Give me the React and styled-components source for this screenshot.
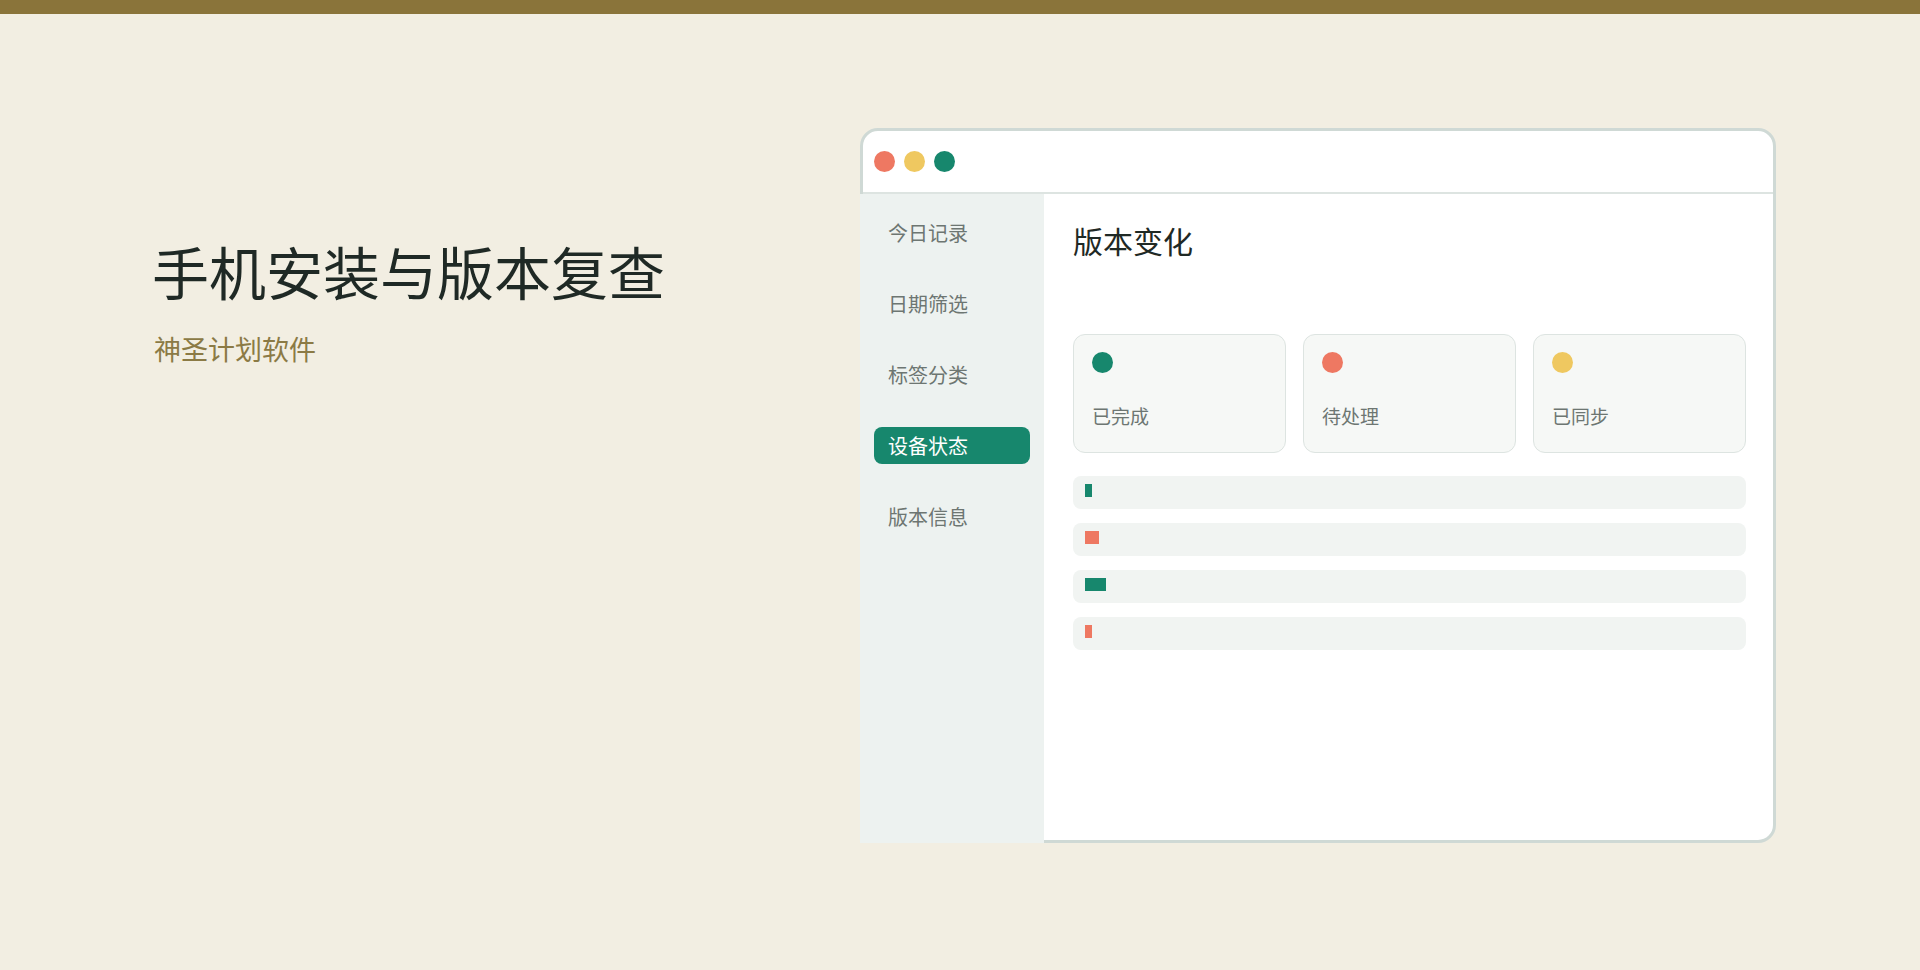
import React from "react";
import styled, { createGlobalStyle } from "styled-components";

const COLOR = {
  bg: "#f2eee2",
  topBar: "#8a743a",
  ink: "#1f2925",
  gold: "#8b7a45",
  border: "#cfd9d5",
  line: "#dde4e1",
  side: "#edf2f0",
  muted: "#6d7672",
  green: "#17876d",
  coral: "#ee7862",
  yellow: "#efc860",
  card: "#f6f8f6",
  track: "#f1f4f2",
};

const FONT = `"Noto Sans CJK SC", "Noto Sans", sans-serif`;

const GlobalStyle = createGlobalStyle`
  body {
    margin: 0;
    background: ${COLOR.bg};
    font-family: ${FONT};
  }
`;

const Page = styled.div`
  min-height: 970px;
  background: ${COLOR.bg};
`;

const TopBar = styled.div`
  height: 14px;
  background: ${COLOR.topBar};
`;

const Stage = styled.div`
  display: flex;
  align-items: flex-start;
  padding: 114px 0 0 152px;
`;

const Hero = styled.div`
  width: 708px;
  padding-top: 109px;
`;

const Title = styled.h1`
  margin: 0;
  font-size: 57px;
  font-weight: 400;
  line-height: 67px;
  color: ${COLOR.ink};
`;

const Subtitle = styled.p`
  margin: 27px 0 0 2px;
  font-size: 27px;
  line-height: 36px;
  color: ${COLOR.gold};
`;

const Window = styled.div`
  box-sizing: border-box;
  width: 916px;
  height: 715px;
  border: 3px solid ${COLOR.border};
  border-radius: 18px;
  background: #fff;
  display: flex;
  flex-direction: column;
`;

const TitleBar = styled.div`
  height: 61px;
  flex-shrink: 0;
  border-bottom: 2px solid ${COLOR.line};
  display: flex;
  align-items: center;
  gap: 9px;
  padding-left: 11px;
`;

const Dot = styled.span`
  display: block;
  width: 21px;
  height: 21px;
  border-radius: 50%;
  background: ${(p) => p.color};
  flex-shrink: 0;
`;

const Body = styled.div`
  flex: 1;
  display: flex;
`;

const Sidebar = styled.nav`
  box-sizing: border-box;
  width: 184px;
  margin: 0 0 -3px -3px;
  padding: 20px 14px;
  background: ${COLOR.side};
  display: flex;
  flex-direction: column;
  gap: 34px;
`;

const NavItem = styled.div`
  height: 37px;
  padding: 0 14px;
  border-radius: 8px;
  display: flex;
  align-items: center;
  font-size: 20px;
  color: ${(p) => (p.$active ? "#fff" : COLOR.muted)};
  background: ${(p) => (p.$active ? COLOR.green : "transparent")};
`;

const Main = styled.main`
  flex: 1;
  padding: 27px 27px 0 29px;
`;

const Heading = styled.h2`
  margin: 0 0 74px;
  font-size: 30px;
  font-weight: 400;
  line-height: 39px;
  color: ${COLOR.ink};
`;

const Cards = styled.div`
  display: grid;
  grid-template-columns: repeat(3, 1fr);
  gap: 17px;
`;

const Card = styled.div`
  box-sizing: border-box;
  height: 119px;
  padding: 17px 18px 0;
  border: 1px solid ${COLOR.line};
  border-radius: 12px;
  background: ${COLOR.card};
`;

const CardLabel = styled.div`
  margin-top: 29px;
  font-size: 19px;
  line-height: 27px;
  color: ${COLOR.muted};
`;

const Bars = styled.div`
  margin-top: 23px;
  display: flex;
  flex-direction: column;
  gap: 14px;
`;

const Track = styled.div`
  height: 33px;
  box-sizing: border-box;
  padding: 8px 12px;
  border-radius: 8px;
  background: ${COLOR.track};
`;

const Fill = styled.div`
  height: 13px;
  background: ${(p) => p.color};
`;

const navItems = ["今日记录", "日期筛选", "标签分类", "设备状态", "版本信息"];

const cards = [
  { label: "已完成", color: COLOR.green },
  { label: "待处理", color: COLOR.coral },
  { label: "已同步", color: COLOR.yellow },
];

const bars = [
  { width: 7, color: COLOR.green },
  { width: 14, color: COLOR.coral },
  { width: 21, color: COLOR.green },
  { width: 7, color: COLOR.coral },
];

export default function App() {
  return (
    <>
      <GlobalStyle />
      <Page>
        <TopBar />
        <Stage>
          <Hero>
            <Title>手机安装与版本复查</Title>
            <Subtitle>神圣计划软件</Subtitle>
          </Hero>
          <Window>
            <TitleBar>
              <Dot color={COLOR.coral} />
              <Dot color={COLOR.yellow} />
              <Dot color={COLOR.green} />
            </TitleBar>
            <Body>
              <Sidebar>
                {navItems.map((item) => (
                  <NavItem key={item} $active={item === "设备状态"}>
                    {item}
                  </NavItem>
                ))}
              </Sidebar>
              <Main>
                <Heading>版本变化</Heading>
                <Cards>
                  {cards.map((c) => (
                    <Card key={c.label}>
                      <Dot color={c.color} />
                      <CardLabel>{c.label}</CardLabel>
                    </Card>
                  ))}
                </Cards>
                <Bars>
                  {bars.map((b, i) => (
                    <Track key={i}>
                      <Fill color={b.color} style={{ width: b.width + "px" }} />
                    </Track>
                  ))}
                </Bars>
              </Main>
            </Body>
          </Window>
        </Stage>
      </Page>
    </>
  );
}
